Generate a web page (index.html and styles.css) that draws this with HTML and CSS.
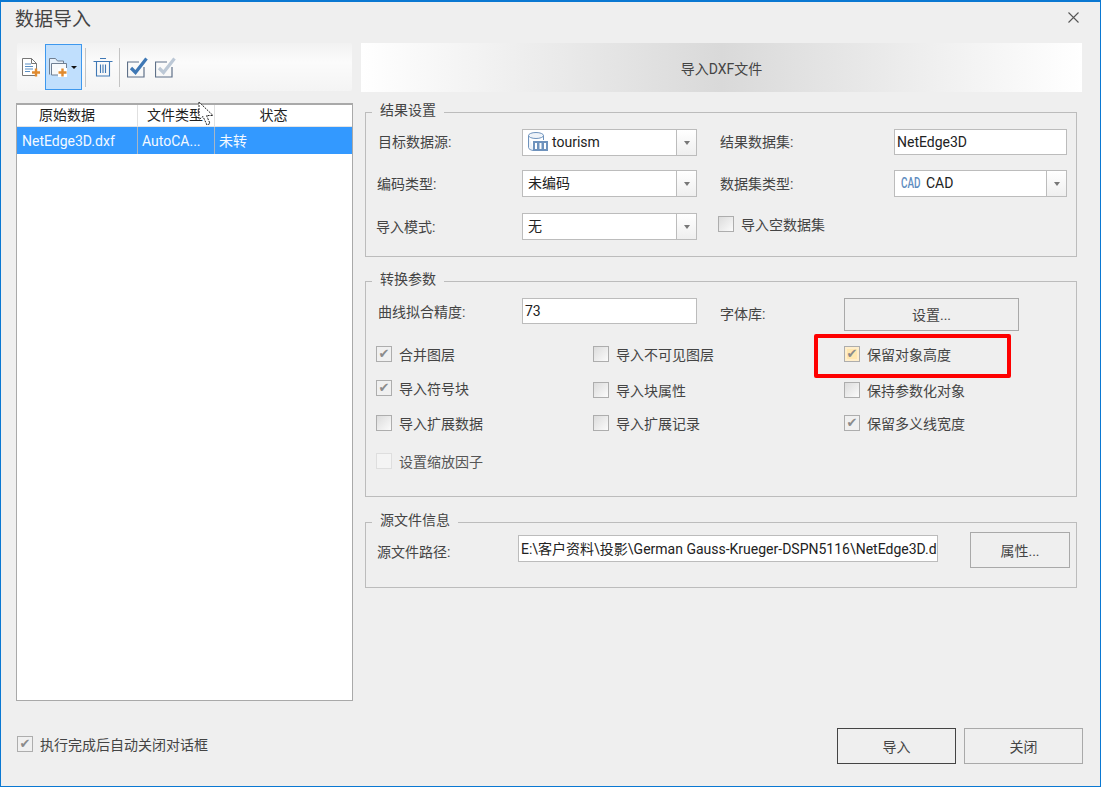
FILE: index.html
```html
<!DOCTYPE html>
<html lang="zh-CN">
<head>
<meta charset="utf-8">
<title>数据导入</title>
<link rel="stylesheet" href="styles.css">
</head>
<body>
<div class="dialog">
  <header class="titlebar">
    <h1 class="title">数据导入</h1>
    <svg class="close" width="11" height="11" viewBox="0 0 11 11"><path d="M0.5 0.5L10.5 10.5M10.5 0.5L0.5 10.5" stroke="#555" stroke-width="1.1" fill="none"/></svg>
  </header>
  <main class="main">
    <section class="left">
      <div class="toolbar">
        <button class="tool">
          <svg width="20" height="20" viewBox="0 0 20 20"><path d="M1.5 1.5H10.5L15.5 6.5V18.5H1.5Z" fill="#fff" stroke="#777"/><path d="M10.5 1.5V6.5H15.5" fill="none" stroke="#777"/><path d="M4 7H10M4 9.5H12M4 12H12M4 14.5H9" stroke="#5b8fc4" fill="none"/><path d="M11 15.5H19M15 11.5V19.5" stroke="#e08a2e" stroke-width="2.4" fill="none"/></svg>
        </button>
        <button class="tool tool-active">
          <svg width="20" height="20" viewBox="0 0 20 20"><path d="M1.5 17.5V1.5H7.5L9.5 4H15.5V6" fill="#e6f0fa" stroke="#6f7f92"/><path d="M3.5 18V6.5H18.5V18Z" fill="#f7f9fb" stroke="#6f7f92"/><rect x="10" y="11" width="9" height="9" fill="#fff"/><path d="M10.5 15.5H18.5M14.5 11.5V19.5" stroke="#e08a2e" stroke-width="2.4" fill="none"/></svg>
          <span class="caret"></span>
        </button>
        <span class="tool-sep"></span>
        <button class="tool tool-trash">
          <svg width="20" height="20" viewBox="0 0 20 20"><path d="M7 1.5H13M0.5 4.5H19.5M3.5 4.5V19H16.5V4.5M7.5 7.5V16M10 7.5V16M12.5 7.5V16" stroke="#3f78b5" stroke-width="1.1" fill="none"/></svg>
        </button>
        <span class="tool-sep tool-sep-near"></span>
        <button class="tool tool-check">
          <svg width="21" height="21" viewBox="0 0 21 21"><path d="M17 10V20H0.5V5H12" fill="none" stroke="#5f7189" stroke-width="1.2"/><path d="M4 11L8.5 15.5L19.5 1.5" fill="none" stroke="#3f78b5" stroke-width="3.2"/></svg>
        </button>
        <button class="tool tool-check2">
          <svg width="21" height="21" viewBox="0 0 21 21"><path d="M17 10V20H0.5V5H12" fill="none" stroke="#5f7189" stroke-width="1.2"/><path d="M4 11L8.5 15.5L19.5 1.5" fill="none" stroke="#bcc8d6" stroke-width="3.2"/></svg>
        </button>
      </div>
      <div class="table">
        <div class="thead">
          <span class="cell c1">原始数据</span>
          <span class="cell c2">文件类型</span>
          <span class="cell c3">状态</span>
        </div>
        <div class="trow">
          <span class="cell c1">NetEdge3D.dxf</span>
          <span class="cell c2">AutoCA...</span>
          <span class="cell c3">未转</span>
        </div>
      </div>
    </section>
    <section class="right">
      <div class="banner">导入DXF文件</div>
      <div class="group group-result">
        <span class="legend">结果设置</span>
        <div class="form-grid">
          <label class="lbl">目标数据源:</label>
          <div class="combo">
            <span class="combo-val">
              <svg width="22" height="22" viewBox="0 0 22 22"><ellipse cx="9" cy="4.5" rx="7.5" ry="3" fill="#eef3f9" stroke="#6f93bd"/><path d="M1.5 4.5V16.5C1.5 18 4 19.5 7 19.5" fill="#eef3f9" stroke="#6f93bd"/><path d="M16.5 4.5V9" stroke="#6f93bd" fill="none"/><rect x="6" y="10" width="15" height="10" fill="#6f93bd"/><path d="M9 12V18M13.5 12V18M18 12V18" stroke="#fff" stroke-width="2"/></svg>
              <span>tourism</span>
            </span>
            <span class="combo-btn"><i></i></span>
          </div>
          <label class="lbl lbl-second">结果数据集:</label>
          <div class="input input-name">NetEdge3D</div>

          <label class="lbl lbl-mid lbl-n1">编码类型:</label>
          <div class="combo"><span class="combo-val combo-plain">未编码</span><span class="combo-btn"><i></i></span></div>
          <label class="lbl lbl-mid lbl-second">数据集类型:</label>
          <div class="combo">
            <span class="combo-val combo-cad"><span class="cad">CAD</span><span>CAD</span></span>
            <span class="combo-btn"><i></i></span>
          </div>

          <label class="lbl lbl-n2">导入模式:</label>
          <div class="combo"><span class="combo-val combo-plain">无</span><span class="combo-btn"><i></i></span></div>
          <label class="check check-empty"><span class="box"></span>导入空数据集</label>
        </div>
      </div>
      <div class="group group-convert">
        <span class="legend">转换参数</span>
        <div class="convert-top">
          <label class="lbl">曲线拟合精度:</label>
          <div class="input input-num">73</div>
          <label class="lbl lbl-font">字体库:</label>
          <button class="btn btn-set">设置...</button>
        </div>
        <div class="check-grid">
          <label class="check"><span class="box box-on">✔</span>合并图层</label>
          <label class="check"><span class="box"></span>导入不可见图层</label>
          <label class="check"><span class="box box-on box-warm">✔</span>保留对象高度</label>

          <label class="check"><span class="box box-on">✔</span>导入符号块</label>
          <label class="check check-low"><span class="box"></span>导入块属性</label>
          <label class="check check-low"><span class="box"></span>保持参数化对象</label>

          <label class="check"><span class="box"></span>导入扩展数据</label>
          <label class="check"><span class="box"></span>导入扩展记录</label>
          <label class="check"><span class="box box-on">✔</span>保留多义线宽度</label>

          <label class="check check-off"><span class="box box-off"></span>设置缩放因子</label>
        </div>
        <div class="highlight"></div>
      </div>
      <div class="group group-source">
        <span class="legend">源文件信息</span>
        <div class="source-row">
          <label class="lbl">源文件路径:</label>
          <div class="input input-path"><span>E:\客户资料\投影\German Gauss-Krueger-DSPN5116\NetEdge3D.dxf</span></div>
          <button class="btn btn-prop">属性...</button>
        </div>
      </div>
    </section>
  </main>
  <footer class="footer">
    <label class="check check-foot"><span class="box box-on">✔</span>执行完成后自动关闭对话框</label>
    <div class="actions">
      <button class="btn btn-action btn-default">导入</button>
      <button class="btn btn-action">关闭</button>
    </div>
  </footer>
  <svg class="cursor" width="18" height="26" viewBox="0 0 18 26"><path d="M1 1V18.5L5 15.5L9 24L12 22.5L8.5 14.5H15Z" fill="#fff" stroke="#222" stroke-width="1" stroke-dasharray="2 1"/></svg>
</div>
</body>
</html>
```
FILE: styles.css
```css
* { box-sizing: border-box; }
html, body { margin: 0; padding: 0; }
body {
  width: 1101px;
  height: 787px;
  overflow: hidden;
  font-family: Roboto, "Noto Sans CJK SC", sans-serif;
  font-size: 14px;
  color: #3c3c3c;
}
.dialog {
  position: relative;
  width: 1101px;
  height: 787px;
  background: #efefef;
  border: 1px solid #0a78d2;
  border-top-width: 2px;
  display: flex;
  flex-direction: column;
}
.titlebar {
  height: 41px;
  flex: none;
  display: flex;
  align-items: center;
  justify-content: space-between;
  padding: 0 21px 5px 14px;
}
.title { margin: 0; font-size: 19px; font-weight: 400; color: #444; line-height: 24px; }
.close { align-self: flex-start; margin-top: 10px; }
.main { flex: 1; min-height: 0; display: flex; gap: 8px; padding-left: 15px; }
.left { width: 337px; flex: none; display: flex; flex-direction: column; }
.toolbar {
  height: 48px;
  margin: 0 1px;
  display: flex;
  align-items: stretch;
  background: linear-gradient(#f2f2f2, #fbfbfb 40%, #f4f4f4 100%);
  border-radius: 2px;
}
.tool {
  border: 0; padding: 0; margin: 0; background: none;
  display: flex; align-items: center; justify-content: center;
  width: 28px; height: 46px; margin-top: 1px;
}
.tool svg { display: block; }
.tool-active {
  width: 37px;
  justify-content: flex-start;
  padding-left: 2px;
  gap: 3px;
  background: #c0dffd;
  border: 1px solid #3d98ee;
}
.caret { width: 0; height: 0; border: 3px solid transparent; border-top: 3px solid #111; border-bottom: 0; }
.tool-sep { width: 1px; height: 39px; margin: 5px 0 0 3px; background: #c4c4c4; flex: none; }
.tool-sep-near { margin-left: 1px; }
.tool-trash { width: 31px; margin-left: 1px; }
.tool-check { margin-left: 2px; width: 30px; }
.tool-check2 { width: 27px; }
.table {
  margin-top: 12px;
  height: 598px;
  background: #fff;
  border: 1px solid #a9a9a9;
  border-top-width: 2px;
}
.thead, .trow { display: grid; grid-template-columns: 121px 77px 1fr; }
.thead { height: 22px; border-bottom: 1px solid #e4e4e4; color: #222; text-align: center; line-height: 20px; }
.thead .cell { border-right: 1px solid #e0e0e0; }
.thead .c1 { padding-right: 20px; }
.thead .c2 { padding-right: 2px; }
.thead .c3 { padding-right: 20px; }
.trow { height: 27px; background: #3399ff; color: #f4f9ff; line-height: 29px; }
.trow .cell { padding-left: 4px; border-right: 1px solid #a8b6c6; }
.trow .c1 { padding-left: 5px; }
.cell { white-space: nowrap; overflow: hidden; }
.thead .c3, .trow .c3 { border-right: 0; }
.right { width: 721px; flex: none; display: flex; flex-direction: column; }
.banner {
  height: 49px;
  display: flex; align-items: center; justify-content: center;
  font-size: 14px;
  color: #444;
  background: linear-gradient(90deg, #fff 0%, #d9d9d9 50%, #fff 100%);
}
.group {
  position: relative;
  margin-left: 4px;
  width: 712px;
  border: 1px solid #bcbcbc;
}
.legend {
  position: absolute;
  left: 6px; top: -13px;
  padding: 0 8px;
  background: #efefef;
  line-height: 20px;
  color: #444;
}
.group-result { margin-top: 20px; height: 145px; padding: 16px 0 0 12px; }
.group-convert { margin-top: 24px; height: 216px; padding: 16px 0 0 12px; }
.group-source { margin-top: 25px; height: 66px; padding: 9px 0 0 11px; }
.form-grid {
  display: grid;
  grid-template-columns: 144px 175px 197px 173px;
  grid-template-rows: 41px 43px 27px;
  align-items: start;
}
.lbl { color: #444; white-space: nowrap; }
.form-grid .lbl { line-height: 27px; }
.form-grid .lbl-mid { margin-top: 1px; }
.form-grid .lbl-second { margin-left: 23px; }
.lbl-n1 { margin-left: -1px; }
.form-grid .lbl-n2 { margin: 1px 0 0 -2px; }
.combo, .input {
  height: 27px;
  background: #fff;
  border: 1px solid #bcbcbc;
  display: flex;
  align-items: center;
  color: #222;
}
.form-grid .input { height: 26px; padding-left: 2px; }
.combo-val { flex: 1; display: flex; align-items: center; gap: 3px; padding-left: 4px; padding-bottom: 1px; min-width: 0; }
.combo-val > span { margin-bottom: 1px; }
.combo-plain { padding-left: 5px; padding-bottom: 4px; }
.combo-cad { padding-bottom: 0; gap: 1px; }
.combo-btn {
  width: 20px; height: 100%;
  flex: none;
  border-left: 1px solid #bcbcbc;
  background: linear-gradient(#fff, #efefef);
  display: flex; align-items: center; justify-content: center;
}
.combo-btn i { width: 0; height: 0; border: 3.5px solid transparent; border-top: 4px solid #777; border-bottom: 0; }
.combo-val .cad {
  display: inline-block;
  width: 24px;
  margin-left: 2px;
  font-size: 15px;
  line-height: 16px;
  color: #5d8cc0;
  transform: scaleX(.66);
  transform-origin: left center;
  font-weight: 500;
}
.input { padding-left: 3px; white-space: nowrap; overflow: hidden; }
.check {
  display: flex; align-items: center; gap: 7px;
  height: 16px;
  white-space: nowrap;
  color: #444;
}
.check-empty { grid-column: 3 / span 2; margin: 3px 0 0 21px; }
.box {
  width: 16px; height: 16px; flex: none;
  border: 1px solid #adadad;
  background: linear-gradient(135deg, #dcdcdc, #fbfbfb);
  display: flex; align-items: center; justify-content: center;
  font-size: 13px; line-height: 14px; color: #8b8b8b;
  font-family: "DejaVu Sans", sans-serif;
  overflow: hidden;
}
.box-on { background: #f0f0f0; }
.box-warm { background: #ffe7b0; box-shadow: inset 0 0 0 2px #ffeecb; }
.box-off { background: #f4f4f4; border-color: #dedede; }
.check-off { color: #555; }
.convert-top {
  display: grid;
  grid-template-columns: 144px 175px 147px 175px;
  align-items: start;
}
.convert-top .lbl { line-height: 28px; }
.convert-top .lbl-font { margin-left: 23px; line-height: 32px; }
.input-num { height: 26px; padding: 0 0 0 2px; }
.btn {
  font: inherit;
  color: #444;
  background: #efefef;
  border: 1px solid #a9a9a9;
  padding: 0;
}
.btn-set { height: 33px; padding-bottom: 2px; }
.check-grid {
  margin: 15px 0 0 -2px;
  display: grid;
  grid-template-columns: 217px 251px 200px;
  grid-template-rows: 34px 35px 38px 16px;
}
.check-low { margin-top: 2px; }
.highlight {
  position: absolute;
  left: 448px; top: 52px;
  width: 197px; height: 44px;
  border: 4px solid #fe0000;
  border-radius: 2px;
}
.source-row { display: flex; align-items: flex-start; }
.source-row .lbl { width: 141px; line-height: 40px; }
.input-path { width: 420px; height: 27px; margin-top: 3px; padding: 0 0 2px 2px; }
.btn-prop { width: 100px; height: 36px; margin-left: 32px; }
.footer {
  flex: none;
  height: 84px;
  display: flex;
  justify-content: space-between;
  padding: 26px 17px 0 16px;
}
.check-foot { margin-top: 8px; }
.actions { display: flex; gap: 8px; }
.btn-action { width: 119px; height: 36px; }
.btn-default { border-color: #444; }
.cursor { position: absolute; left: 197px; top: 99px; }
```
